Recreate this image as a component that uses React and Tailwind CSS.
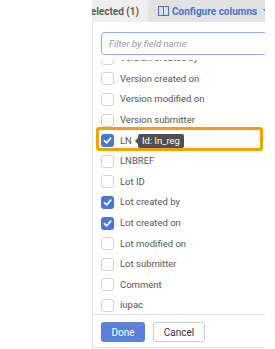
import React from "react";

const fields = [
  { label: "Version created by", checked: false },
  { label: "Version created on", checked: false },
  { label: "Version modified on", checked: false },
  { label: "Version submitter", checked: false },
  { label: "LN", checked: true, tip: "Id: ln_reg" },
  { label: "LNBREF", checked: false },
  { label: "Lot ID", checked: false },
  { label: "Lot created by", checked: true },
  { label: "Lot created on", checked: true },
  { label: "Lot modified on", checked: false },
  { label: "Lot submitter", checked: false },
  { label: "Comment", checked: false },
  { label: "iupac", checked: false },
];

const Checkbox = ({ checked }) =>
  checked ? (
    <span className="w-[13px] h-[13px] rounded-[3px] bg-[#4d75d2] flex items-center justify-center shrink-0">
      <svg width="9" height="9" viewBox="0 0 10 10">
        <path d="M1.5 5.2 L4 7.6 L8.6 2.4" fill="none" stroke="white" strokeWidth="1.8" strokeLinecap="round" strokeLinejoin="round" />
      </svg>
    </span>
  ) : (
    <span className="w-[13px] h-[13px] rounded-[3px] border border-[#d2d2d2] bg-white shrink-0" />
  );

const Row = ({ field }) => (
  <div className="relative h-[20.6px] flex items-center gap-[6px]">
    <Checkbox checked={field.checked} />
    <span className="text-[9.5px] text-[#555]">{field.label}</span>
    {field.tip && (
      <span className="absolute left-[37px] top-[4px] h-[14px] px-[4px] flex items-center bg-[#4f4f4f] text-white text-[9.5px] rounded-[2px]">
        <span className="absolute -left-[3px] top-[4px] w-0 h-0 border-y-[3px] border-y-transparent border-r-[3px] border-r-[#4f4f4f]" />
        {field.tip}
      </span>
    )}
  </div>
);

export default function App() {
  return (
    <div className="relative w-[275px] h-[349px] bg-white overflow-hidden flex font-['Roboto',sans-serif]">
      <div className="w-[92px] shrink-0" />
      <div className="w-[173px] shrink-0 flex flex-col overflow-hidden">
        <div className="h-[22px] bg-[#efefef] flex items-end">
          <div className="w-[56px] h-[22px] overflow-hidden flex items-center justify-end pr-[9px]">
            <span className="text-[10px] font-semibold text-[#555] whitespace-nowrap">Selected (1)</span>
          </div>
          <div className="w-[117px] h-[22px] bg-[#e2e2e2] rounded-tl-[3px] flex items-center pl-[10px] gap-[3px] text-[#4a72c8]">
            <svg width="11" height="10" viewBox="0 0 11 10" className="shrink-0">
              <rect x="0.5" y="0.5" width="10" height="9" fill="none" stroke="currentColor" strokeWidth="1" />
              <line x1="5.5" y1="0.5" x2="5.5" y2="9.5" stroke="currentColor" strokeWidth="1" />
            </svg>
            <span className="text-[10px] font-bold whitespace-nowrap">Configure columns</span>
            <svg width="6" height="4" viewBox="0 0 6 4" className="shrink-0 ml-[3px]">
              <path d="M0 0 L6 0 L3 3.5 Z" fill="currentColor" />
            </svg>
          </div>
        </div>
        <div className="flex-1 flex flex-col border-l border-[#e0e0e0] mb-[2px] border-b border-b-[#e6e6e6] pl-[8px]">
          <div className="pt-[8px] pb-[5px] -mr-[6px]">
            <input
              className="w-full h-[23px] border border-[#8eb0ee] rounded-[3px] px-[7px] text-[9.5px] italic placeholder:text-[#9a9a9a] outline-none"
              placeholder="Filter by field name"
            />
          </div>
          <div className="h-[255px] overflow-hidden border-b border-[#e6e6e6] -ml-[8px] pl-[8px]">
            <div className="-mt-[12px]">
              {fields.map((f) => (
                <Row key={f.label} field={f} />
              ))}
            </div>
          </div>
          <div className="flex items-center gap-[8px] pt-[7px] pb-[5px]">
            <button className="w-[44px] h-[20px] rounded-[3px] bg-[#5b80d8] text-white text-[10px]">Done</button>
            <button className="w-[52px] h-[20px] rounded-[3px] bg-white border border-[#cfcfcf] text-[#333] text-[10px]">Cancel</button>
          </div>
        </div>
      </div>
      <div className="absolute left-[96px] top-[127px] w-[167px] h-[24px] border-[3px] border-[#efa400] rounded-[3px]" />
    </div>
  );
}
